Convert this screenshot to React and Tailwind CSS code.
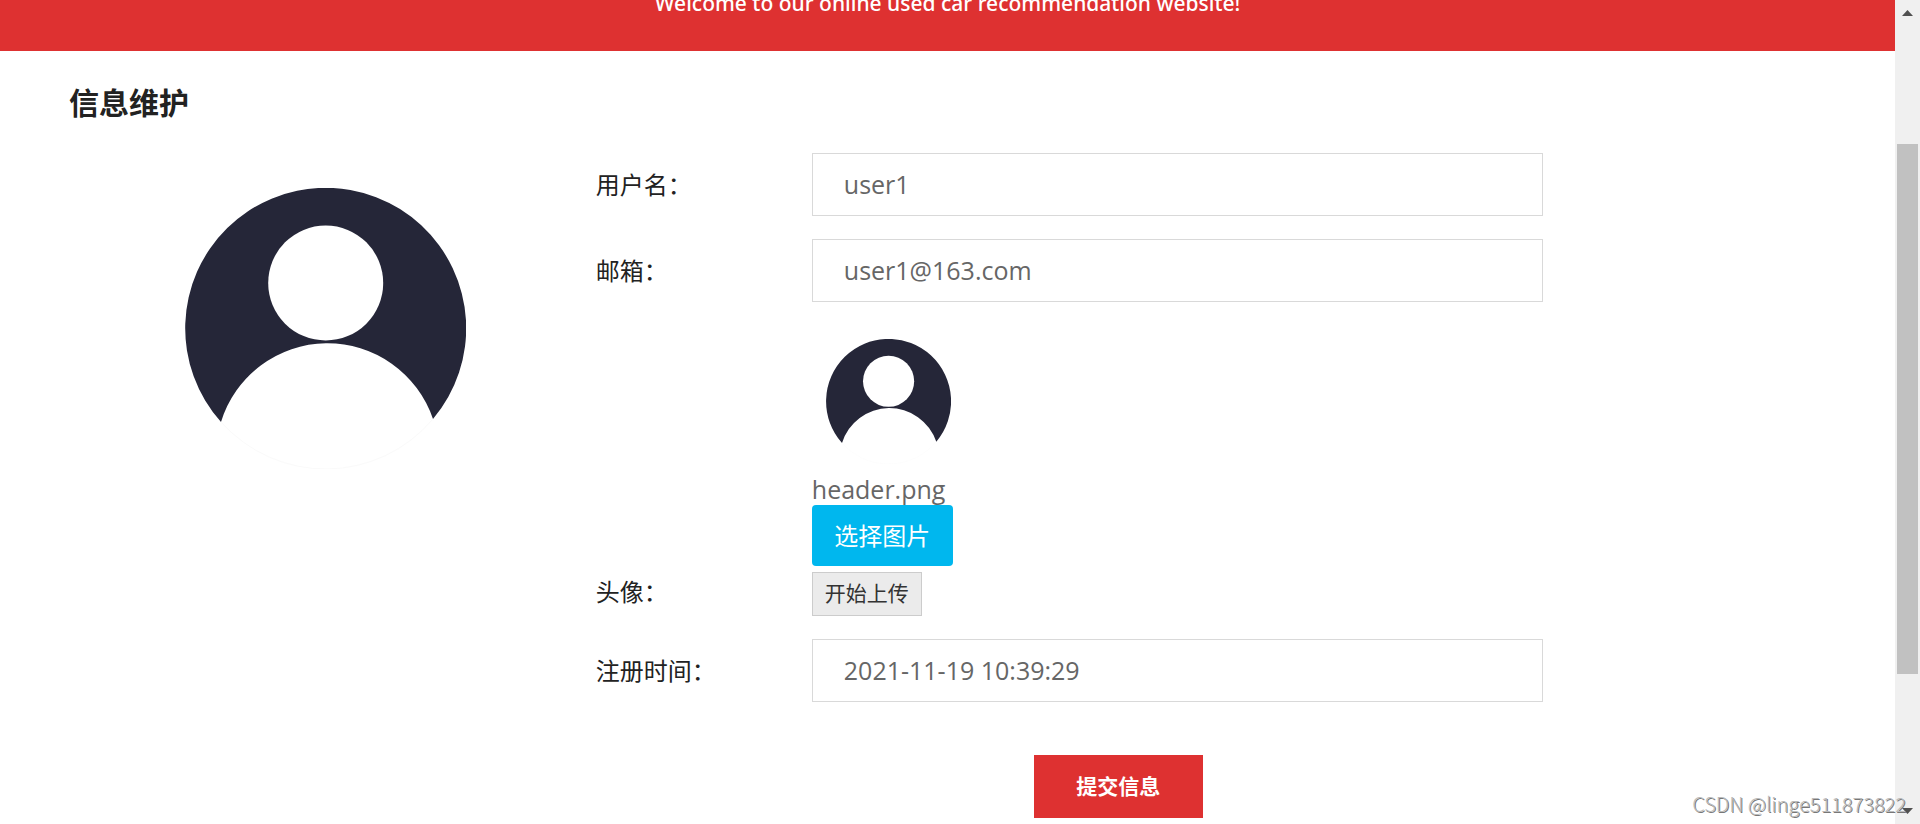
import React, { useRef, useState } from 'react';

const inputClass =
    'w-full max-w-[731px] h-[63px] border border-[#d9d9d9] bg-white px-[31px] pb-0.5 text-[25px] text-[#666] outline-none focus:border-[#de3131]';

function Avatar({ className }) {
    return (
        <svg viewBox="0 0 281 281" className={className} role="img" aria-label="avatar">
            <path d="M36.5 234.5 A140 140 0 0 0 247.5 231.5" fill="none" stroke="#fafafa" strokeWidth="1" />
            <path d="M36 234 A140.5 140.5 0 1 1 248 231 A111.5 112 0 0 0 36 234 Z" fill="#252638" />
            <circle cx="140.7" cy="95" r="57.5" fill="#fff" />
        </svg>
    );
}

function Row({ id, label, children }) {
    return (
        <div className="flex items-center">
            <label htmlFor={id} className="w-[216px] shrink-0 text-2xl text-[#222]">
                {label}
            </label>
            {children}
        </div>
    );
}

function ScrollBar() {
    return (
        <div className="flex w-[25px] shrink-0 flex-col items-center bg-[#f0f0f0] py-2.5" aria-hidden="true">
            <svg width="11" height="6" viewBox="0 0 11 6">
                <path d="M5.5 0 L11 6 H0 Z" fill="#505050" />
            </svg>
            <div className="mt-32 h-[530px] w-[21px] bg-[#c1c1c1]" />
            <svg width="11" height="6" viewBox="0 0 11 6" className="mt-auto">
                <path d="M0 0 H11 L5.5 6 Z" fill="#505050" />
            </svg>
        </div>
    );
}

export default function App() {
    const fileRef = useRef(null);
    const [fileName, setFileName] = useState('header.png');

    return (
        <div className="relative flex h-screen overflow-hidden bg-white font-['Open_Sans','Noto_Sans_CJK_SC',sans-serif]">
            <main className="min-w-0 flex-1">
                <header className="h-[51px] overflow-hidden bg-[#de3131] text-center text-white">
                    <p className="-mt-3 font-['Noto_Sans',sans-serif] text-[21px] leading-[30px] font-medium">
                        Welcome to our online used car recommendation website!
                    </p>
                </header>

                <section className="pt-8 pr-[70px] pl-[69px]">
                    <h1 className="text-3xl leading-10 font-bold text-[#222]">信息维护</h1>

                    <div className="mt-[30px] flex items-start">
                        <div className="flex w-[30%] shrink-0 justify-center pt-[35px] pr-3.5">
                            <Avatar className="size-[281px]" />
                        </div>

                        <form className="flex flex-1 flex-col gap-[23px]" onSubmit={(e) => e.preventDefault()}>
                            <Row id="username" label="用户名：">
                                <input id="username" type="text" defaultValue="user1" className={inputClass} />
                            </Row>
                            <Row id="email" label="邮箱：">
                                <input id="email" type="text" defaultValue="user1@163.com" className={inputClass} />
                            </Row>

                            <div className="flex items-end">
                                <label htmlFor="picture" className="w-[216px] shrink-0 pb-2 text-2xl text-[#222]">
                                    头像：
                                </label>
                                <div className="flex flex-col items-start">
                                    <Avatar className="mt-3.5 ml-3.5 size-[125px]" />
                                    <span className="mt-2.5 text-[25px] leading-[31px] text-[#666]">{fileName}</span>
                                    <input
                                        id="picture"
                                        ref={fileRef}
                                        type="file"
                                        accept="image/*"
                                        className="hidden"
                                        onChange={(e) => e.target.files[0] && setFileName(e.target.files[0].name)}
                                    />
                                    <button
                                        type="button"
                                        className="h-[61px] w-[141px] rounded bg-[#00b7ee] text-2xl text-white hover:bg-[#00a2d4]"
                                        onClick={() => fileRef.current.click()}
                                    >
                                        选择图片
                                    </button>
                                    <button
                                        type="button"
                                        className="mt-1.5 h-11 w-[110px] border border-[#ccc] bg-[#ebebeb] text-[21px] text-[#333] hover:bg-[#e0e0e0]"
                                    >
                                        开始上传
                                    </button>
                                </div>
                            </div>

                            <Row id="created" label="注册时间：">
                                <input id="created" type="text" defaultValue="2021-11-19 10:39:29" className={inputClass} />
                            </Row>

                            <div className="mt-[30px] flex w-[85%] justify-center">
                                <button
                                    type="submit"
                                    className="h-[63px] w-[169px] bg-[#de3131] text-[21px] font-bold text-white hover:bg-[#c62828]"
                                >
                                    提交信息
                                </button>
                            </div>
                        </form>
                    </div>
                </section>
            </main>

            <ScrollBar />

            <span className="absolute right-3.5 bottom-1.5 font-['Noto_Sans_CJK_SC',sans-serif] text-xl font-light text-[#bbb] [text-shadow:1px_1px_0_#777]">
                CSDN @linge511873822
            </span>
        </div>
    );
}
